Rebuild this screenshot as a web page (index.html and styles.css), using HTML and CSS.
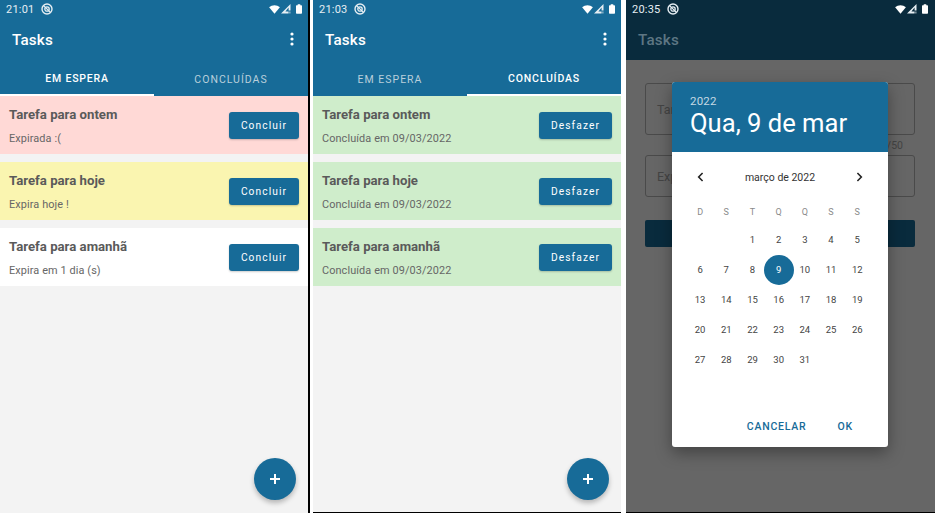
FILE: index.html
```html
<html>
    <head>
        <meta charset="utf-8">
        <title>Tasks</title>
        <link rel="stylesheet" href="styles.css">
    </head>
    <body>
        <svg class="defs">
            <symbol id="i-sync" viewBox="0 0 12 12">
                <circle cx="6" cy="6" r="5" fill="none" stroke="currentColor" stroke-width="1.4"/>
                <circle cx="6" cy="6" r="2.2" fill="none" stroke="currentColor" stroke-width="1.3"/>
                <path d="M2.600 2.600L9.400 9.400" stroke="currentColor" stroke-width="1.300"/>
            </symbol>
            <symbol id="i-wifi" viewBox="0 0 12 10">
                <path d="M0 2.600C3.400-.5 8.600-.5 12 2.600L6 9.600z" fill="currentColor"/>
            </symbol>
            <symbol id="i-signal" viewBox="0 0 10 10">
                <path d="M0 9.500L9.500 0v6.500H7.600V3.600L4.400 7.500h3.200v2z" fill="currentColor"/>
                <path d="M8.200 7.600h1.300v1.900H8.200z" fill="currentColor" opacity=".6"/>
            </symbol>
            <symbol id="i-battery" viewBox="0 0 7 11">
                <path d="M2 0h3v1h1.200c.4 0 .8.4.8.8v8.400c0 .4-.4.8-.8.8H.8c-.4 0-.8-.4-.8-.8V1.800C0 1.400.4 1 .8 1H2z" fill="currentColor"/>
            </symbol>
            <symbol id="i-more" viewBox="0 0 4 14">
                <circle cx="2" cy="2" r="1.600" fill="currentColor"/>
                <circle cx="2" cy="7" r="1.600" fill="currentColor"/>
                <circle cx="2" cy="12" r="1.600" fill="currentColor"/>
            </symbol>
        </svg>

        <div class="screens">
            <div class="screen first">
                <div class="topbar">
                    <div class="status">
                        <span class="clock">21:01</span>
                        <svg class="ic-sync"><use href="#i-sync"/></svg>
                        <span class="spacer"></span>
                        <svg class="ic-wifi"><use href="#i-wifi"/></svg>
                        <svg class="ic-signal"><use href="#i-signal"/></svg>
                        <svg class="ic-battery"><use href="#i-battery"/></svg>
                    </div>
                    <div class="appbar">
                        <span class="title">Tasks</span>
                        <svg class="ic-more"><use href="#i-more"/></svg>
                    </div>
                    <div class="tabs">
                        <div class="tab active">EM ESPERA</div>
                        <div class="tab">CONCLUÍDAS</div>
                    </div>
                </div>
                <div class="list">
                    <div class="card red">
                        <div class="info">
                            <div class="name">Tarefa para ontem</div>
                            <div class="due">Expirada :(</div>
                        </div>
                        <button class="action">Concluir</button>
                    </div>
                    <div class="card yellow">
                        <div class="info">
                            <div class="name">Tarefa para hoje</div>
                            <div class="due">Expira hoje !</div>
                        </div>
                        <button class="action">Concluir</button>
                    </div>
                    <div class="card white">
                        <div class="info">
                            <div class="name">Tarefa para amanhã</div>
                            <div class="due">Expira em 1 dia (s)</div>
                        </div>
                        <button class="action">Concluir</button>
                    </div>
                </div>
                <button class="fab">
                    <svg viewBox="0 0 12 12"><path d="M5 1h2v4h4v2H7v4H5V7H1V5h4z" fill="currentColor"/></svg>
                </button>
            </div>

            <div class="screen second">
                <div class="topbar">
                    <div class="status">
                        <span class="clock">21:03</span>
                        <svg class="ic-sync"><use href="#i-sync"/></svg>
                        <span class="spacer"></span>
                        <svg class="ic-wifi"><use href="#i-wifi"/></svg>
                        <svg class="ic-signal"><use href="#i-signal"/></svg>
                        <svg class="ic-battery"><use href="#i-battery"/></svg>
                    </div>
                    <div class="appbar">
                        <span class="title">Tasks</span>
                        <svg class="ic-more"><use href="#i-more"/></svg>
                    </div>
                    <div class="tabs">
                        <div class="tab">EM ESPERA</div>
                        <div class="tab active">CONCLUÍDAS</div>
                    </div>
                </div>
                <div class="list">
                    <div class="card green">
                        <div class="info">
                            <div class="name">Tarefa para ontem</div>
                            <div class="due">Concluída em 09/03/2022</div>
                        </div>
                        <button class="action undo">Desfazer</button>
                    </div>
                    <div class="card green">
                        <div class="info">
                            <div class="name">Tarefa para hoje</div>
                            <div class="due">Concluída em 09/03/2022</div>
                        </div>
                        <button class="action undo">Desfazer</button>
                    </div>
                    <div class="card green">
                        <div class="info">
                            <div class="name">Tarefa para amanhã</div>
                            <div class="due">Concluída em 09/03/2022</div>
                        </div>
                        <button class="action undo">Desfazer</button>
                    </div>
                </div>
                <button class="fab">
                    <svg viewBox="0 0 12 12"><path d="M5 1h2v4h4v2H7v4H5V7H1V5h4z" fill="currentColor"/></svg>
                </button>
            </div>

            <div class="screen third">
                <div class="topbar dim">
                    <div class="status">
                        <span class="clock">20:35</span>
                        <svg class="ic-sync"><use href="#i-sync"/></svg>
                        <span class="spacer"></span>
                        <svg class="ic-wifi"><use href="#i-wifi"/></svg>
                        <svg class="ic-signal"><use href="#i-signal"/></svg>
                        <svg class="ic-battery"><use href="#i-battery"/></svg>
                    </div>
                    <div class="appbar">
                        <span class="title">Tasks</span>
                    </div>
                </div>
                <div class="form">
                    <div class="field tall">Tar</div>
                    <div class="counter">/50</div>
                    <div class="field">Exp</div>
                    <div class="save"></div>
                </div>

                <div class="dialog">
                    <div class="dialog-head">
                        <div class="year">2022</div>
                        <div class="day">Qua, 9 de mar</div>
                    </div>
                    <div class="month">
                        <svg viewBox="0 0 8 12"><path d="M6.500 1.200L1.800 6l4.700 4.800" fill="none" stroke="currentColor" stroke-width="1.900"/></svg>
                        <span>março de 2022</span>
                        <svg viewBox="0 0 8 12"><path d="M1.500 1.200L6.200 6l-4.700 4.800" fill="none" stroke="currentColor" stroke-width="1.900"/></svg>
                    </div>
                    <div class="weekdays">
                        <span>D</span><span>S</span><span>T</span><span>Q</span><span>Q</span><span>S</span><span>S</span>
                    </div>
                    <div class="days">
                        <span></span><span></span><span>1</span><span>2</span><span>3</span><span>4</span><span>5</span>
                        <span>6</span><span>7</span><span>8</span><span class="picked">9</span><span>10</span><span>11</span><span>12</span>
                        <span>13</span><span>14</span><span>15</span><span>16</span><span>17</span><span>18</span><span>19</span>
                        <span>20</span><span>21</span><span>22</span><span>23</span><span>24</span><span>25</span><span>26</span>
                        <span>27</span><span>28</span><span>29</span><span>30</span><span>31</span>
                    </div>
                    <div class="dialog-actions">
                        <span>CANCELAR</span>
                        <span>OK</span>
                    </div>
                </div>
            </div>
        </div>
    </body>
</html>
```

FILE: styles.css
```css
html, body {
    margin: 0;
    height: 513px;
    overflow: hidden;
    background: #fff;
    font-family: Roboto, "Liberation Sans", sans-serif;
}

.defs {
    display: none;
}

.screens {
    display: flex;
    height: 513px;
}

.screen {
    position: relative;
    width: 308px;
    height: 513px;
    box-sizing: border-box;
    background: #f3f3f3;
    overflow: hidden;
    flex: none;
}
.screen.first {
    width: 310px;
    border-right: 2px solid #000;
}
.screen.second {
    margin-left: 3px;
    border-bottom: 1px solid #000;
}
.screen.third {
    margin-left: 5px;
    width: 309px;
    background: #666;
    border-bottom: 1px solid #000;
}

.topbar {
    background: #176b98;
    color: #fff;
}
.topbar.dim {
    background: #092b3d;
}

.status {
    display: flex;
    align-items: center;
    height: 18px;
    padding: 0 6px;
    font-size: 11px;
    color: #e6eef3;
}
.third .status {
    padding-right: 7px;
}
.clock {
    width: 35px;
    letter-spacing: 0.2px;
}
.spacer {
    flex: 1;
}
.ic-sync {
    width: 12px;
    height: 12px;
}
.ic-wifi {
    width: 11px;
    height: 9px;
    color: #fff;
}
.ic-signal {
    width: 10px;
    height: 10px;
    margin-left: 1px;
}
.ic-battery {
    width: 6px;
    height: 10px;
    margin-left: 5px;
    color: #fff;
}

.appbar {
    display: flex;
    align-items: center;
    justify-content: space-between;
    height: 42px;
    padding: 0 14px 0 12px;
}
.title {
    margin-top: 2px;
    font-size: 15.2px;
    font-weight: 500;
    letter-spacing: 0.2px;
}
.dim .title {
    color: #5d7683;
}
.ic-more {
    width: 4px;
    height: 14px;
}

.tabs {
    display: flex;
    height: 36px;
}
.tab {
    flex: 1;
    display: flex;
    align-items: center;
    justify-content: center;
    box-sizing: border-box;
    padding-top: 2px;
    font-size: 10.5px;
    letter-spacing: 1px;
    color: #b9cfdb;
}
.tab.active {
    color: #fff;
    font-weight: 500;
    letter-spacing: 0.8px;
    border-bottom: 2px solid #fff;
}

.list {
    display: flex;
    flex-direction: column;
    gap: 8px;
}
.card {
    display: flex;
    align-items: center;
    justify-content: space-between;
    height: 58px;
    padding: 0 9px;
}
.card.red {
    background: #ffd9d6;
}
.card.yellow {
    background: #faf5b0;
}
.card.white {
    background: #fff;
}
.card.green {
    background: #cfedcb;
}
.info {
    margin-top: 3px;
}
.name {
    font-size: 13.2px;
    font-weight: 700;
    color: #5a5a5a;
    line-height: 16px;
}
.due {
    margin-top: 9px;
    font-size: 10.9px;
    color: #666;
    line-height: 14px;
    letter-spacing: 0.1px;
}
.action {
    width: 70px;
    height: 27px;
    padding: 0;
    border: 0;
    border-radius: 3px;
    background: #176b98;
    color: #fff;
    font-family: inherit;
    font-size: 10.2px;
    letter-spacing: 1.1px;
    box-shadow: 0 1px 2px rgba(0, 0, 0, 0.2);
}
.action.undo {
    width: 73px;
}

.fab {
    position: absolute;
    right: 12px;
    bottom: 13px;
    width: 42px;
    height: 42px;
    padding: 0;
    border: 0;
    border-radius: 50%;
    background: #176b98;
    color: #fff;
    display: flex;
    align-items: center;
    justify-content: center;
    box-shadow: 0 3px 5px rgba(0, 0, 0, 0.25);
}
.second .fab {
    bottom: 12px;
}
.fab svg {
    width: 12px;
    height: 12px;
}

.form {
    padding: 23px 20px 0 19px;
    display: flex;
    flex-direction: column;
    color: #444;
}
.field {
    display: flex;
    align-items: center;
    height: 42px;
    padding-left: 11px;
    box-sizing: border-box;
    border: 1px solid #4a4a4a;
    border-radius: 3px;
    font-size: 12.5px;
}
.field.tall {
    height: 52px;
}
.counter {
    text-align: right;
    height: 20px;
    line-height: 21px;
    padding-right: 12px;
    font-size: 10.5px;
}
.save {
    margin-top: 23px;
    height: 27px;
    background: #092b3d;
    border-radius: 2px;
}

.dialog {
    position: absolute;
    left: 46px;
    top: 82px;
    width: 216px;
    height: 365px;
    background: #fff;
    border-radius: 3px;
    overflow: hidden;
    box-shadow: 0 6px 16px rgba(0, 0, 0, 0.35);
    display: flex;
    flex-direction: column;
}
.dialog-head {
    height: 70px;
    box-sizing: border-box;
    padding: 13px 0 0 18px;
    background: #176b98;
    color: #fff;
}
.year {
    font-size: 11.5px;
    line-height: 13px;
    color: #c5d9e4;
    letter-spacing: 0.2px;
}
.day {
    font-size: 25.6px;
    line-height: 31px;
}
.month {
    display: flex;
    align-items: center;
    justify-content: space-between;
    height: 50px;
    padding: 0 25px;
    font-size: 10.5px;
    color: #333;
}
.month svg {
    width: 7px;
    height: 10px;
    color: #222;
}
.weekdays, .days {
    display: grid;
    grid-template-columns: repeat(7, 26.2px);
    padding-left: 15px;
    text-align: center;
}
.weekdays {
    height: 20px;
    line-height: 20px;
    font-size: 9px;
    color: #8a8a8a;
}
.days {
    grid-auto-rows: 30px;
    margin-top: 3px;
    height: 150px;
    font-size: 9.5px;
    line-height: 30px;
    color: #444;
}
.days .picked {
    justify-self: center;
    width: 30px;
    height: 30px;
    border-radius: 50%;
    background: #176b98;
    color: #fff;
}
.dialog-actions {
    display: flex;
    justify-content: flex-end;
    gap: 31px;
    padding: 45px 35px 0 0;
    font-size: 10.5px;
    font-weight: 500;
    letter-spacing: 0.8px;
    color: #176b98;
}
```
